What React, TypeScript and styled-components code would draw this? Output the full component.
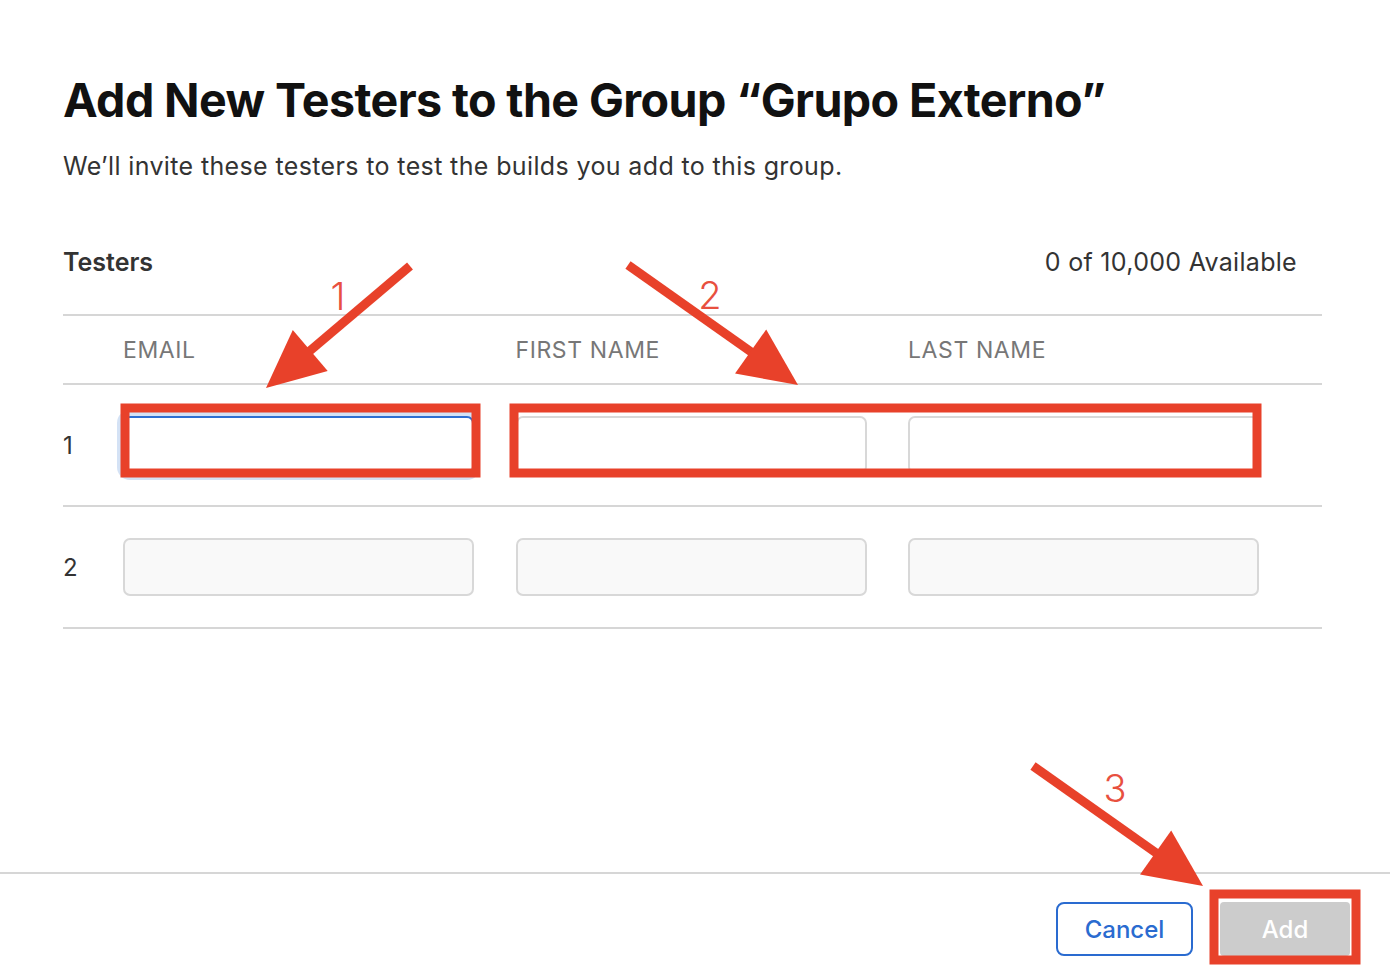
import React from "react";
import styled, { createGlobalStyle } from "styled-components";

const GlobalStyle = createGlobalStyle`
  html, body {
    margin: 0;
    padding: 0;
    background: #ffffff;
  }
  body {
    font-family: Inter, "Liberation Sans", Arial, sans-serif;
    color: #1d1d1f;
    -webkit-font-smoothing: antialiased;
  }
`;

const RED = "#e8412a";

interface Arrow {
  from: [number, number];
  to: [number, number];
}

const arrows: Arrow[] = [
  { from: [410, 266], to: [266, 388] },
  { from: [628, 265], to: [798, 385] },
  { from: [1033, 766], to: [1203, 886] },
];

const marks = [
  { x: 338, y: 310, label: "1" },
  { x: 710, y: 309, label: "2" },
  { x: 1115, y: 802, label: "3" },
];

const boxes = [
  { x: 125, y: 408, w: 351, h: 65 },
  { x: 514, y: 408, w: 743, h: 65 },
  { x: 1214, y: 894, w: 142, h: 66 },
];

const rows = [1, 2];
const columns = ["Email", "First Name", "Last Name"];

const arrowShape = ({ from, to }: Arrow) => {
  const dx = to[0] - from[0];
  const dy = to[1] - from[1];
  const len = Math.sqrt(dx * dx + dy * dy);
  const ux = dx / len;
  const uy = dy / len;
  const head = 58;
  const half = 27;
  const bx = to[0] - ux * head;
  const by = to[1] - uy * head;
  const px = -uy * half;
  const py = ux * half;
  return {
    line: { x1: from[0], y1: from[1], x2: bx + ux * 4, y2: by + uy * 4 },
    points: `${to[0]},${to[1]} ${bx + px},${by + py} ${bx - px},${by - py}`,
  };
};

export default function App() {
  return (
    <>
      <GlobalStyle />
      <Page>
        <Content>
          <Title>Add New Testers to the Group “Grupo Externo”</Title>
          <Subtitle>
            We’ll invite these testers to test the builds you add to this group.
          </Subtitle>
          <SectionHeader>
            <SectionTitle>Testers</SectionTitle>
            <Availability>0 of 10,000 Available</Availability>
          </SectionHeader>
          <Table>
            <HeaderRow>
              <span />
              {columns.map((c) => (
                <ColumnLabel key={c}>{c}</ColumnLabel>
              ))}
            </HeaderRow>
            {rows.map((r) => (
              <Row key={r}>
                <RowNumber>{r}</RowNumber>
                {columns.map((c, i) => (
                  <Field
                    key={c}
                    $active={r === 1}
                    $focused={r === 1 && i === 0}
                  />
                ))}
              </Row>
            ))}
          </Table>
        </Content>
        <Footer>
          <CancelButton>Cancel</CancelButton>
          <AddButton disabled>Add</AddButton>
        </Footer>
        <Annotations width="1390" height="980" viewBox="0 0 1390 980">
          {boxes.map((b, i) => (
            <rect
              key={i}
              x={b.x}
              y={b.y}
              width={b.w}
              height={b.h}
              fill="none"
              stroke={RED}
              strokeWidth="9"
            />
          ))}
          {arrows.map((a, i) => {
            const s = arrowShape(a);
            return (
              <g key={i}>
                <line {...s.line} stroke={RED} strokeWidth="9" />
                <polygon points={s.points} fill={RED} />
              </g>
            );
          })}
          {marks.map((m) => (
            <MarkText key={m.label} x={m.x} y={m.y} textAnchor="middle">
              {m.label}
            </MarkText>
          ))}
        </Annotations>
      </Page>
    </>
  );
}

const Page = styled.div`
  position: relative;
  width: 1390px;
  height: 980px;
  display: flex;
  flex-direction: column;
  overflow: hidden;
`;

const Content = styled.div`
  flex: 1;
  padding: 70px 68px 0 63px;
`;

const Title = styled.h1`
  margin: 0;
  font-size: 46.6px;
  line-height: 60px;
  font-weight: 700;
  letter-spacing: -0.6px;
  color: #111111;
`;

const Subtitle = styled.p`
  margin: 20px 0 0;
  font-size: 25px;
  line-height: 32px;
  color: #333333;
  letter-spacing: 0.37px;
`;

const SectionHeader = styled.div`
  display: flex;
  justify-content: space-between;
  align-items: center;
  margin-top: 60px;
  padding-right: 25px;
  height: 40px;
`;

const SectionTitle = styled.h2`
  margin: 0;
  font-size: 25px;
  font-weight: 600;
  color: #333333;
`;

const Availability = styled.span`
  font-size: 25px;
  letter-spacing: 0.3px;
  color: #333333;
`;

const Table = styled.div`
  margin-top: 32px;
  border-top: 2px solid #d6d6d6;
`;

const gridCols = `
  display: grid;
  grid-template-columns: 18.5px repeat(3, 351px);
  column-gap: 41.5px;
  align-items: center;
  border-bottom: 2px solid #d6d6d6;
`;

const HeaderRow = styled.div`
  ${gridCols}
  height: 67px;
`;

const ColumnLabel = styled.span`
  font-size: 23px;
  text-transform: uppercase;
  letter-spacing: 0.6px;
  color: #777777;
`;

const Row = styled.div`
  ${gridCols}
  height: 120px;
`;

const RowNumber = styled.span`
  font-size: 24px;
  color: #333333;
`;

const Field = styled.div<{ $active: boolean; $focused: boolean }>`
  box-sizing: border-box;
  height: 58px;
  border-radius: 7px;
  border: 2px solid ${(p) => (p.$focused ? "#2f6fd1" : "#d8d8d8")};
  background: ${(p) => (p.$active ? "#ffffff" : "#f9f9f9")};
  box-shadow: ${(p) => (p.$focused ? "0 0 0 6px #d4e2f5" : "none")};
`;

const Footer = styled.div`
  border-top: 2px solid #d6d6d6;
  height: 108px;
  box-sizing: border-box;
  display: flex;
  justify-content: flex-end;
  align-items: flex-start;
  gap: 27px;
  padding: 28px 40px 0 0;
`;

const buttonBase = `
  box-sizing: border-box;
  height: 54px;
  border-radius: 8px;
  font-family: Inter, "Liberation Sans", Arial, sans-serif;
  font-size: 24px;
  font-weight: 500;
  cursor: pointer;
`;

const CancelButton = styled.button`
  ${buttonBase}
  width: 137px;
  background: #ffffff;
  color: #2a6bd0;
  border: 2px solid #2a6bd0;
`;

const AddButton = styled.button`
  ${buttonBase}
  width: 130px;
  border: none;
  border-radius: 4px;
  background: #cccccc;
  color: #ffffff;
`;

const Annotations = styled.svg`
  position: absolute;
  top: 0;
  left: 0;
  pointer-events: none;
`;

const MarkText = styled.text`
  font-family: Inter, "Liberation Sans", Arial, sans-serif;
  font-size: 38px;
  font-weight: 300;
  fill: #e8503f;
`;
